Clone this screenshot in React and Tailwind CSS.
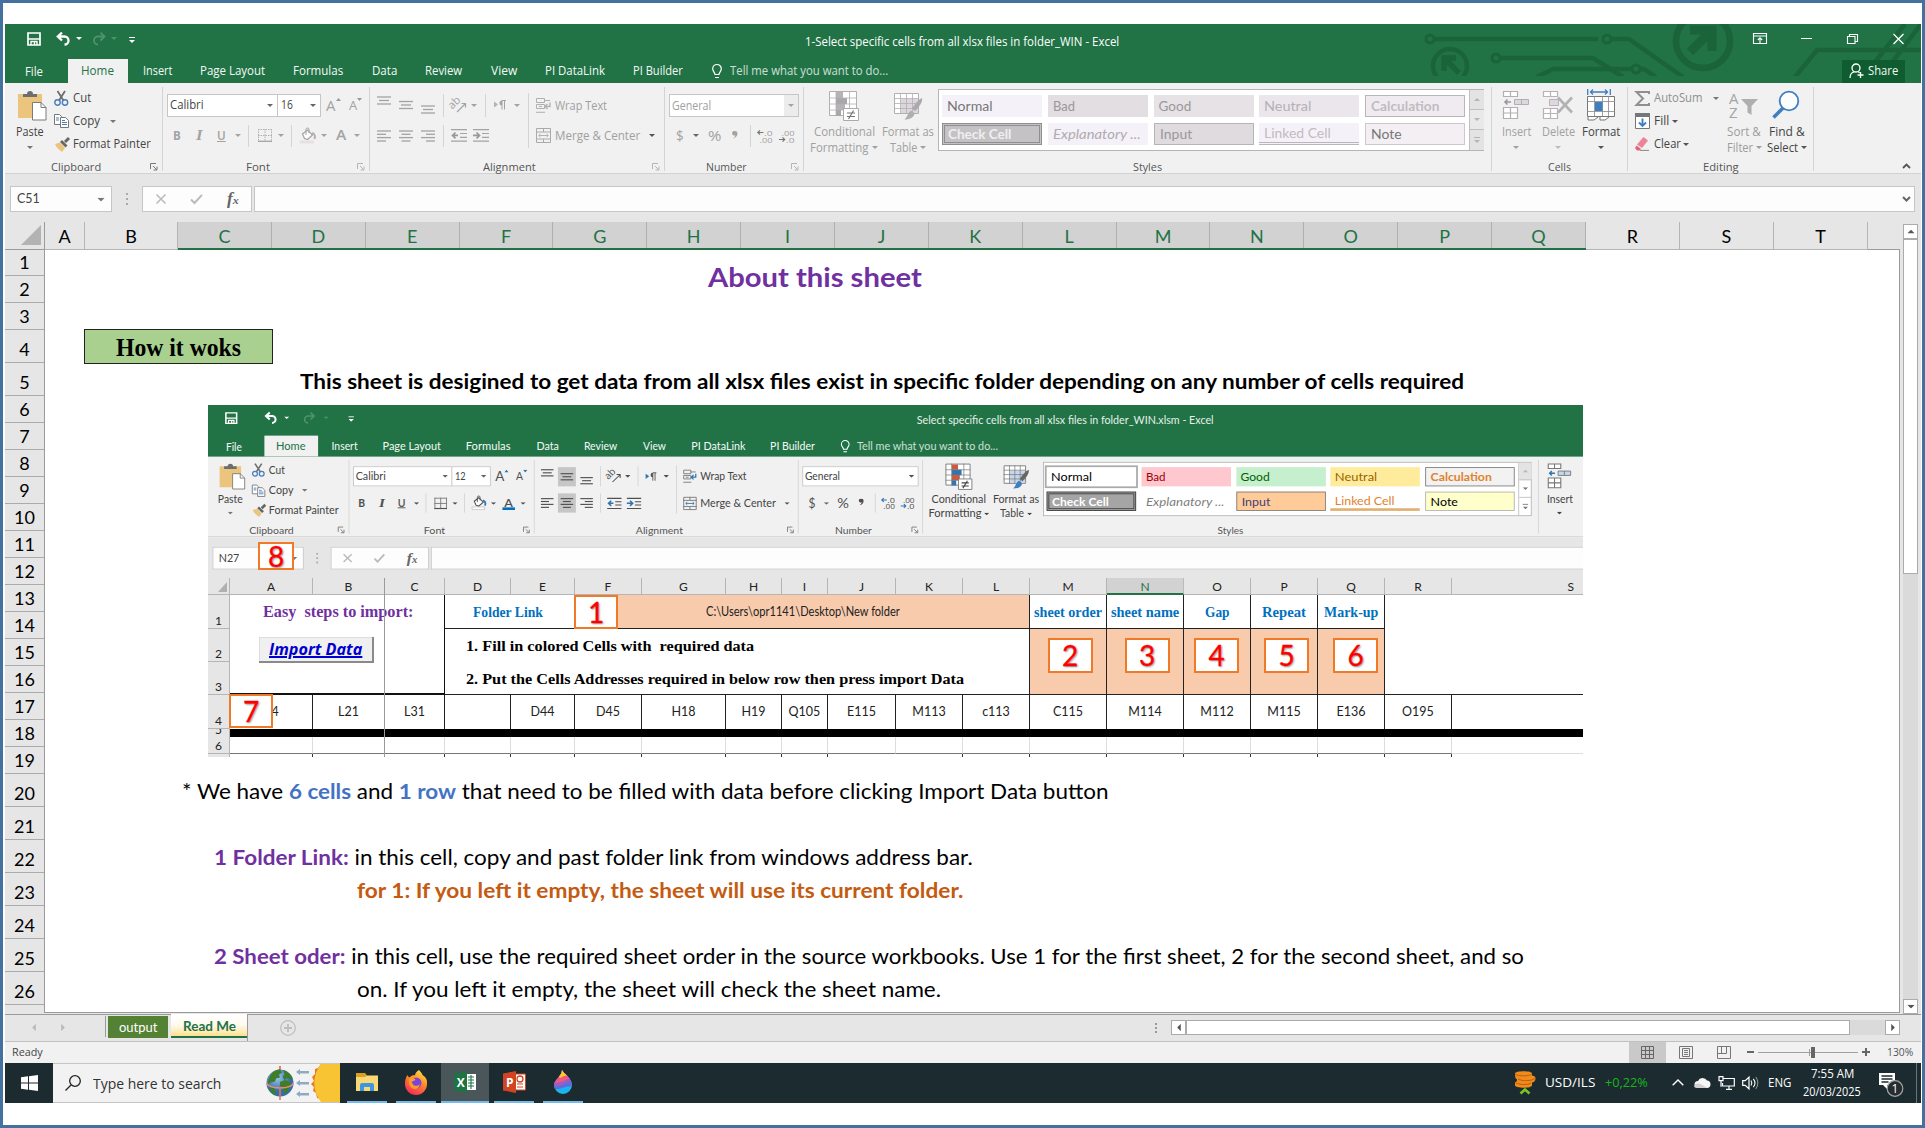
import { useLayoutEffect, useRef } from "react";

const LATO = "font-['Lato',sans-serif]";
const SERIF = "font-['Liberation_Serif',serif]";

/* Single-line text squeezed or stretched to the width its class gives it. */
function Fit({ className = "", children }) {
  const outer = useRef(null);
  const inner = useRef(null);
  useLayoutEffect(() => {
    const o = outer.current;
    const i = inner.current;
    if (i.offsetWidth) i.style.transform = `scaleX(${o.offsetWidth / i.offsetWidth})`;
  });
  return (
    <span ref={outer} className={`inline-block flex-none whitespace-nowrap ${className}`}>
      <span ref={inner} className="inline-block origin-left whitespace-pre">
        {children}
      </span>
    </span>
  );
}

function Caret({ className = "" }) {
  return (
    <svg viewBox="0 0 6 3" className={`h-[3px] w-[6px] flex-none ${className}`}>
      <path d="M0 0h6L3 3z" fill="currentColor" />
    </svg>
  );
}

const Sep = ({ className = "" }) => <span className={`w-px flex-none bg-[#d4d4d4] ${className}`} />;

function Svg({ w, h, className = "", children }) {
  return (
    <svg viewBox={`0 0 ${w} ${h}`} width={w} height={h} className={`flex-none overflow-visible ${className}`} fill="none">
      {children}
    </svg>
  );
}

function Lines({ rows, w = 14, h = 18 }) {
  return (
    <Svg w={w} h={h}>
      {rows.map(([x1, x2, y]) => (
        <path key={y} d={`M${x1} ${y}H${x2}`} stroke="currentColor" strokeWidth="1.3" />
      ))}
    </Svg>
  );
}

function Group({ className, label, labelClass, launcher = true, dimLauncher, children }) {
  return (
    <div className={`flex h-[84px] flex-none flex-col border-r border-[#d4d4d4] ${className}`}>
      <div className="flex h-[70px] flex-none items-start">{children}</div>
      <div className="flex h-[20px] flex-none items-center">
        <div className={`flex flex-1 justify-center ${launcher ? "pr-[4px]" : ""}`}>
          <Fit className={`text-[11.5px] leading-[18px] text-[#555] ${labelClass}`}>{label}</Fit>
        </div>
        {launcher && (
          <Svg w={8} h={8} className={`mr-[4px] ${dimLauncher ? "text-[#b5b5b5]" : "text-[#777]"}`}>
            <path d="M.5 6V.5H6M3 3l3.5 3.5M7 3.5V7H3.5" stroke="currentColor" />
          </Svg>
        )}
      </div>
    </div>
  );
}

function Ribbon({ live }) {
  const dim = live ? "text-[#505050]" : "text-[#a3a3a3]";
  const dimText = live ? "text-[#444]" : "text-[#a0a0a0]";
  const blue = live ? "#2e75b6" : "#b3b3b3";
  const grey = live ? "#777" : "#b3aeb3";
  return (
    <div className="flex h-[92px] border-b border-[#d2d2d2] bg-[#f1f1f1] pt-[4px] text-[#444]">
      <Group className="w-[158px]" label="Clipboard" labelClass="w-[50px]">
        <div className="ml-[7px] flex w-[36px] flex-none flex-col items-center">
          <Svg w={29} h={31} className="ml-[4px] mt-[3px]">
            <path d="M0 4h24v24H0z" fill="#ebc57d" />
            <path d="M5 7V4h4a3 3 0 0 1 6 0h4v3z" fill="#6e6e6e" />
            <path d="M14.5 12.5h8.5l5 5v12.5h-13.500z" fill="#fff" stroke="#7a7a7a" />
            <path d="M23 12.5v5h5" stroke="#7a7a7a" />
          </Svg>
          <Fit className="mt-[3px] w-[28px] text-[12px] leading-[16px]">Paste</Fit>
          <Caret className="mt-[6px] text-[#777]" />
        </div>
        <div className="ml-[6px] flex flex-none flex-col">
          <div className="flex h-[23px] items-center">
            <Svg w={15} h={15}>
              <path d="M3.5 0l6 9.5M11 0L5 9.500" stroke="#6e6e6e" strokeWidth="1.8" />
              <circle cx="3.5" cy="11.5" r="2.7" stroke="#4a7ebb" strokeWidth="1.4" />
              <circle cx="11" cy="11.5" r="2.7" stroke="#4a7ebb" strokeWidth="1.4" />
            </Svg>
            <Fit className="ml-[4px] w-[18px] text-[12px]">Cut</Fit>
          </div>
          <div className="flex h-[23px] items-center">
            <Svg w={15} h={14}>
              <path d="M.5.5h5l2 2v8h-7z" fill="#fff" stroke="#777" />
              <path d="M6.5 3.5h5l3 3v7h-8z" fill="#fff" stroke="#777" />
              <path d="M2 4h3M2 6h3M8 8.5h5M8 10.5h5M8 6.5h3" stroke="#4a7ebb" />
            </Svg>
            <Fit className="ml-[4px] w-[27px] text-[12px]">Copy</Fit>
            <Caret className="ml-[10px] text-[#777]" />
          </div>
          <div className="flex h-[23px] items-center">
            <Svg w={16} h={15}>
              <path d="M1 7l5-1.5L11 11l-3 4C5 13 2 10 1 7z" fill="#ebc57d" />
              <path d="M6 5l2-2 5.5 5.5-2 2z" fill="#666" />
              <path d="M11 5l4-4" stroke="#666" strokeWidth="3" />
            </Svg>
            <Fit className="ml-[3px] w-[78px] text-[12px]">Format Painter</Fit>
          </div>
        </div>
      </Group>

      <Group className="w-[207px]" label="Font" labelClass="w-[24px]" dimLauncher={!live}>
        <div className="flex flex-col pl-[4px]">
          <div className="mt-[7px] flex h-[23px] items-center">
            <div className="flex h-full w-[111px] flex-none items-center border border-[#c6c6c6] bg-white">
              <Fit className="ml-[2px] w-[34px] text-[12px]">Calibri</Fit>
              <Caret className="ml-[63px] text-[#666]" />
            </div>
            <div className="-ml-px flex h-full w-[44px] flex-none items-center border border-[#c6c6c6] bg-white">
              <Fit className="ml-[3px] w-[12px] text-[12px]">{live ? "12" : "16"}</Fit>
              <Caret className="ml-[17px] text-[#666]" />
            </div>
            <div className={`ml-[5px] flex ${dim}`}>
              <Fit className="w-[10px] text-[15px]">A</Fit>
              <svg viewBox="0 0 5 3" className="mt-[4px] h-[3px] w-[5px]"><path d="M0 3h5L2.5 0z" fill={live ? blue : "#999"} /></svg>
              <Fit className="ml-[8px] mt-[2px] w-[8px] text-[13px]">A</Fit>
              <svg viewBox="0 0 5 3" className="mt-[4px] h-[3px] w-[5px]"><path d="M0 0h5L2.5 3z" fill={live ? blue : "#999"} /></svg>
            </div>
          </div>
          <div className={`mt-[8px] flex h-[22px] items-center ${dim}`}>
            <Fit className="ml-[6px] w-[8px] text-[13px] font-bold">B</Fit>
            <Fit className={`ml-[15px] w-[6px] text-[14px] font-bold italic ${SERIF}`}>I</Fit>
            <Fit className="ml-[15px] w-[9px] text-[13px] font-semibold [&>span]:underline">U</Fit>
            <Caret className="ml-[9px]" />
            <Sep className="ml-[7px] h-[22px]" />
            <Svg w={14} h={13} className="ml-[9px]">
              <path d="M.5 0v13M13.5 0v13M7 0v13M0 .5h14M0 6.5h14" stroke={grey} strokeDasharray={live ? "" : "1.5 1"} />
              <path d="M0 12.3h14" stroke="currentColor" strokeWidth="1.3" />
            </Svg>
            <Caret className="ml-[6px]" />
            <Sep className="ml-[7px] h-[22px]" />
            <Svg w={16} h={16} className="ml-[8px]">
              <path d="M2.5 6l5-4 5 5-5 4.500-3-1z" fill="#fff" stroke="currentColor" strokeWidth="1.2" />
              <path d="M6 7V1.5a1.5 1.5 0 0 1 3 0V5" stroke="currentColor" />
              <path d="M12 5c3 1 3.5 3 2.5 6" stroke={blue} strokeWidth="2" />
              <path d="M0 12.5h14v3H0z" fill={live ? "#fff" : "#e6dfe6"} stroke={live ? "#aaa" : "none"} strokeWidth=".6" />
            </Svg>
            <Caret className="ml-[5px]" />
            <span className="ml-[7px] flex flex-col items-center">
              <Fit className="w-[10px] text-[14px] font-semibold leading-[13px]">A</Fit>
              <span className={`h-[3px] w-[14px] ${live ? "bg-[#0070c0]" : "bg-transparent"}`} />
            </span>
            <Caret className="ml-[6px]" />
          </div>
        </div>
      </Group>

      <Group className="w-[295px]" label="Alignment" labelClass="w-[53px]" dimLauncher={!live}>
        <div className={`flex w-[158px] flex-none flex-col ${dim}`}>
          <div className="mt-[7px] flex h-[23px] items-center">
            <span className="ml-[4px] flex w-[20px] justify-center"><Lines rows={[[0, 14, 1], [2, 12, 4.5], [0, 14, 8]]} /></span>
            <span className={`ml-[2px] flex w-[20px] justify-center py-[2px] ${live ? "bg-[#c6c6c6]" : ""}`}><Lines rows={[[0, 14, 5.5], [2, 12, 9], [0, 14, 12.5]]} /></span>
            <span className="ml-[2px] flex w-[20px] justify-center"><Lines rows={[[0, 14, 10], [2, 12, 13.5], [0, 14, 17]]} /></span>
            <Sep className="ml-[5px] h-[23px]" />
            <Svg w={16} h={15} className="ml-[7px]">
              <text x="0" y="9" transform="rotate(-45 4 9)" fontSize="11" fill="currentColor" fontFamily="Open Sans">ab</text>
              <path d="M6 14l8-8M14.5 9.5V5.5h-4" stroke="currentColor" strokeWidth="1.2" />
            </Svg>
            <Caret className="ml-[4px]" />
            <Sep className="ml-[8px] h-[23px]" />
            <Svg w={12} h={10} className="ml-[8px]">
              <path d="M0 1.5v6l4-3z" fill={blue} />
              <path d="M8 .5h4M8 .5v9M10.5.5v9" stroke="currentColor" />
              <path d="M8 .5a2.5 2.5 0 0 0 0 5z" fill="currentColor" />
            </Svg>
            <Caret className="ml-[8px]" />
          </div>
          <div className="mt-[8px] flex h-[22px] items-center">
            <span className="ml-[4px] flex w-[20px] justify-center"><Lines h={12} rows={[[0, 14, 1], [0, 9, 4.3], [0, 14, 7.6], [0, 9, 11]]} /></span>
            <span className={`ml-[2px] flex w-[20px] justify-center py-[5px] ${live ? "bg-[#c6c6c6]" : ""}`}><Lines h={12} rows={[[0, 14, 1], [2.5, 11.5, 4.3], [0, 14, 7.6], [2.5, 11.5, 11]]} /></span>
            <span className="ml-[2px] flex w-[20px] justify-center"><Lines h={12} rows={[[0, 14, 1], [5, 14, 4.3], [0, 14, 7.6], [5, 14, 11]]} /></span>
            <Sep className="ml-[5px] h-[22px]" />
            <Svg w={16} h={13} className="ml-[7px]">
              <path d="M0 .7h16M9 4.5h7M9 8.3h7M0 12.2h16" stroke="currentColor" strokeWidth="1.2" />
              <path d="M7 6.4H2M4.5 3.5L1.5 6.4l3 2.9" stroke={live ? blue : "#999"} strokeWidth="1.7" />
            </Svg>
            <Svg w={16} h={13} className="ml-[6px]">
              <path d="M0 .7h16M9 4.5h7M9 8.3h7M0 12.2h16" stroke="currentColor" strokeWidth="1.2" />
              <path d="M0 6.4h6M3.5 3.5l3 2.9-3 2.9" stroke={live ? blue : "#999"} strokeWidth="1.7" />
            </Svg>
          </div>
        </div>
        <Sep className="mt-[6px] h-[55px]" />
        <div className={`flex flex-col ${dimText}`}>
          <div className="mt-[7px] flex h-[23px] items-center">
            <Svg w={15} h={15} className="ml-[7px]">
              <path d="M.5.5h8v4h-8zM.5 6.5h8v4h-8zM0 14.3h9" stroke={grey} />
              <path d="M8 2.5h6M3 8.5h3" stroke={grey} />
              <path d="M14 4.5v4H9M11.5 6L9 8.5l2.5 2.5" stroke={blue} strokeWidth="1.4" />
            </Svg>
            <Fit className="ml-[4px] mt-[1px] w-[52px] text-[12px]">Wrap Text</Fit>
          </div>
          <div className="mt-[8px] flex h-[22px] items-center">
            <Svg w={15} h={15} className="ml-[7px]">
              <path d="M.5.5h14v14H.5zM0 4h15M0 11h15M7.5 0v4M7.5 11v4" stroke={live ? "#777" : "#aaa"} />
              <path d="M3 7.5h9M4.5 5.8L2.8 7.5l1.7 1.7M10.5 5.8l1.7 1.7-1.7 1.7" stroke={blue} />
            </Svg>
            <Fit className="ml-[4px] mt-[1px] w-[85px] text-[12px]">Merge &amp; Center</Fit>
            <Caret className="ml-[9px] text-[#555]" />
          </div>
        </div>
      </Group>

      <Group className="w-[139px]" label="Number" labelClass="w-[41px]" dimLauncher={!live}>
        <div className={`flex flex-col pl-[4px] ${dim}`}>
          <div className="mt-[7px] flex h-[23px] w-[130px] items-center border border-[#c6c6c6] bg-white">
            <Fit className={`ml-[2px] mt-[1px] w-[39px] text-[12px] ${dimText}`}>General</Fit>
            <span className={`ml-auto flex h-full w-[14px] items-center justify-center ${live ? "" : "bg-[#ececec]"}`}><Caret /></span>
          </div>
          <div className="mt-[8px] flex h-[22px] items-center">
            <Fit className="ml-[7px] w-[8px] text-[15px]">$</Fit>
            <Caret className="ml-[9px] text-[#666]" />
            <Fit className="ml-[9px] w-[13px] text-[15px]">%</Fit>
            <svg viewBox="0 0 6 9" className="mb-[2px] ml-[11px] h-[8px] w-[6px]"><path d="M3 0a2.6 2.6 0 1 0 .5 4.8C3 6.5 2 7.5 1 8.5 4 7.5 6 5.5 5.8 2.5A2.8 2.8 0 0 0 3 0z" fill="currentColor" /></svg>
            <Sep className="ml-[12px] h-[22px]" />
            <Svg w={16} h={14} className="ml-[6px]">
              <text x="7" y="6.5" fontSize="8" textLength="8.5" lengthAdjust="spacingAndGlyphs" fill="currentColor" fontFamily="Open Sans">.0</text>
              <text x="2.5" y="13.5" fontSize="8" textLength="13" lengthAdjust="spacingAndGlyphs" fill="currentColor" fontFamily="Open Sans">.00</text>
              <path d="M6.5 3.5H.8M3 1.3L.8 3.5l2.2 2.2" stroke={live ? blue : "#777"} strokeWidth="1.2" />
            </Svg>
            <Svg w={16} h={14} className="ml-[6px]">
              <text x="2.5" y="6.5" fontSize="8" textLength="13" lengthAdjust="spacingAndGlyphs" fill="currentColor" fontFamily="Open Sans">.00</text>
              <text x="7" y="13.5" fontSize="8" textLength="8.5" lengthAdjust="spacingAndGlyphs" fill="currentColor" fontFamily="Open Sans">.0</text>
              <path d="M0 10.5h5.700M3.500 8.300l2.200 2.200-2.200 2.200" stroke={live ? blue : "#777"} strokeWidth="1.2" />
            </Svg>
          </div>
        </div>
      </Group>

      <Group className="w-[688px]" label="Styles" labelClass="w-[29px]" launcher={false}>
        <div className={`ml-[5px] flex w-[70px] flex-none flex-col items-center ${dimText}`}>
          <Svg w={30} h={30} className="mt-[4px]">
            <path d="M.5.5h27v24H.5z" fill="#fff" stroke={grey} />
            <path d="M7 1h7v6H7zM7 13h9v6H7z" fill={live ? "#d0583a" : "#b5b3b5"} />
            <path d="M7 7h11v6H7zM7 19h5v6H7z" fill={live ? "#2e75b6" : "#a9a7a9"} />
            <path d="M0 7h28M0 13h28M0 19h28M7 0v25M20.5 0v25" stroke={grey} strokeWidth=".8" />
            <path d="M14.5 17.5h15v12h-15z" fill="#fff" stroke={live ? "#777" : "#aaa"} />
            <path d="M18 22h8M18 25.5h8M24.5 19.5l-5 8.5" stroke={live ? "#444" : "#777"} strokeWidth="1.2" />
          </Svg>
          <Fit className="mt-[3px] w-[61px] text-[12px] leading-[16px]">Conditional</Fit>
          <span className="flex h-[16px] items-center">
            <Fit className="w-[59px] text-[12px] leading-[16px]">Formatting</Fit>
            <Caret className="ml-[3px]" />
          </span>
        </div>
        <div className={`ml-[3px] flex w-[52px] flex-none flex-col items-center ${dimText}`}>
          <Svg w={29} h={30} className="mt-[4px]">
            <path d="M.5 2.5h24v20H.5z" fill="#fff" stroke={grey} />
            <path d="M7 8h17v14H7z" fill={live ? "#c5d7ec" : "#dcd7dc"} />
            <path d="M0 7.5h25M0 12.5h25M0 17.5h25M6.5 2v21M12.5 2v21M18.5 2v21" stroke={grey} strokeWidth=".8" />
            <path d="M28 7c1 4-3 9-7 13l-3-2.5C21 13 24 9 28 7z" fill={live ? "#666" : "#aaa"} />
            <path d="M17 19.5l3.5 2.5c0 4-4 6.5-10 6.5 3-2 3-7 6.5-9z" fill={live ? "#3f7fbf" : "#b0aeb0"} />
          </Svg>
          <Fit className="mt-[3px] w-[52px] text-[12px] leading-[16px]">Format as</Fit>
          <span className="flex h-[16px] items-center">
            <Fit className="w-[27px] text-[12px] leading-[16px]">Table</Fit>
            <Caret className="ml-[3px]" />
          </span>
        </div>
        <Gallery live={live} />
      </Group>

      {live ? (
        <div className="flex w-[44px] flex-none justify-end"><InsertCells live dimText={dimText} blue={blue} grey={grey} /></div>
      ) : (
        <CellsAndEditing dimText={dimText} blue={blue} grey={grey} />
      )}
    </div>
  );
}

function InsertCells({ live, dimText, blue, grey }) {
  return (
    <div className={`flex w-[42px] flex-none flex-col items-center ${dimText}`}>
      <Svg w={26} h={28} className="mt-[4px]">
        <path d="M.5.5h14v5H.5zM7.5.5v5M.5 16.5h14v11H.5zM7.5 16.5v11M.5 22h14" fill="#fff" stroke={grey} strokeWidth="1.2" />
        <path d="M11.5 8.5h14v5h-14zM18.5 8.5v5" fill={live ? "#c5d7ec" : "#ddd8dd"} stroke={grey} />
        <path d="M8 11H1.5M4.5 8.5L2 11l2.5 2.5" stroke={live ? blue : "#999"} strokeWidth="1.6" />
      </Svg>
      <Fit className="mt-[5px] w-[29px] text-[12px] leading-[16px]">Insert</Fit>
      <Caret className="mt-[6px]" />
    </div>
  );
}

function CellsAndEditing({ dimText, blue, grey }) {
  return (
    <>
      <Group className="w-[136px]" label="Cells" labelClass="w-[23px]" launcher={false}>
        <div className="ml-[3px] flex-none"><InsertCells dimText={dimText} blue={blue} grey={grey} /></div>
        <div className="flex w-[42px] flex-none flex-col items-center text-[#a0a0a0]">
          <Svg w={30} h={28} className="mt-[4px]">
            <path d="M.5.5h14v5H.5zM7.5.5v5M.5 17.5h14v10H.5zM7.5 17.5v10M.5 22.5h14" fill="#fff" stroke="#b9b3b9" strokeWidth="1.2" />
            <path d="M6.5 8.5h9v6h-9z" fill="#ddd8dd" stroke="#b9b3b9" />
            <path d="M15 6.5l14 15M29 6.5l-14 15" stroke="#b3b1b3" strokeWidth="2.6" />
          </Svg>
          <Fit className="mt-[5px] w-[33px] text-[12px] leading-[16px]">Delete</Fit>
          <Caret className="mt-[6px] text-[#bbb]" />
        </div>
        <div className="ml-[1px] flex w-[42px] flex-none flex-col items-center">
          <Svg w={28} h={32} className="mt-[2px]">
            <path d="M.7 0v6M23.3 0v6M3 3h18M6 .5L3.5 3 6 5.5M18 .5L20.5 3 18 5.5" stroke="#3f7fbf" strokeWidth="1.3" />
            <path d="M.5 7.5h27v20H.5z" fill="#fff" stroke="#777" />
            <path d="M0 12.5h28M0 22.5h28M7.5 7v20M15.5 7v20M21.5 7v20" stroke="#888" strokeWidth=".8" />
            <path d="M8 13h7.5v9H8z" fill="#3f7fbf" />
            <path d="M1 28v3h6l4-3M13 28v3h5l4-3" stroke="#777" fill="#fff" />
          </Svg>
          <Fit className="mt-[3px] w-[38px] text-[12px] leading-[16px]">Format</Fit>
          <Caret className="mt-[6px] text-[#555]" />
        </div>
      </Group>

      <Group className="w-[186px]" label="Editing" labelClass="w-[36px]" launcher={false}>
        <div className="ml-[7px] flex w-[90px] flex-none flex-col">
          <div className="flex h-[23px] items-center text-[#8f8f8f]">
            <Svg w={15} h={15}><path d="M14 3V1H1.5l6.5 6.5L1.5 14H14v-2" stroke="currentColor" strokeWidth="2" /></Svg>
            <Fit className="ml-[4px] w-[49px] text-[12px]">AutoSum</Fit>
            <Caret className="ml-[10px] text-[#777]" />
          </div>
          <div className="flex h-[23px] items-center">
            <Svg w={15} h={16}>
              <path d="M.5.5h14v15H.5z" fill="#fff" stroke="#777" />
              <path d="M0 0h15v4H0z" fill="#777" />
              <path d="M7.5 5.5v7.5M4 9.5L7.5 13 11 9.5" stroke="#3f7fbf" strokeWidth="1.9" />
            </Svg>
            <Fit className="ml-[4px] w-[15px] text-[12px]">Fill</Fit>
            <Caret className="ml-[3px] text-[#555]" />
          </div>
          <div className="flex h-[23px] items-center">
            <Svg w={15} h={14}>
              <path d="M8.5 0L13 3.5 7 11 2 7.5z" fill="#ee8296" />
              <path d="M1.5 8.5L6 12l-1.5 1.5H2L0 11z" fill="#e8607a" />
              <path d="M5 13.4h9" stroke="#888" />
            </Svg>
            <Fit className="ml-[4px] w-[27px] text-[12px]">Clear</Fit>
            <Caret className="ml-[2px] text-[#555]" />
          </div>
        </div>
        <div className="flex w-[40px] flex-none flex-col pl-[2px] text-[#9c9c9c]">
          <Svg w={29} h={28} className="ml-[2px] mt-[5px]">
            <text x="0" y="12" fontSize="15" fill="#a5a5a5" fontFamily="Open Sans">A</text>
            <text x="0" y="26" fontSize="15" fill="#a5a5a5" fontFamily="Open Sans">Z</text>
            <path d="M12 7h17l-6.500 7v9l-4-2.500V14z" fill="#b0aeb0" />
          </Svg>
          <Fit className="mt-[4px] w-[34px] text-[12px] leading-[16px]">Sort &amp;</Fit>
          <span className="flex h-[16px] items-center">
            <Fit className="w-[26px] text-[12px] leading-[16px]">Filter</Fit>
            <Caret className="ml-[3px]" />
          </span>
        </div>
        <div className="flex w-[42px] flex-none flex-col pl-[2px]">
          <Svg w={28} h={28} className="ml-[5px] mt-[4px]">
            <path d="M11 17l-9.5 9.5" stroke="#3f7fbf" strokeWidth="3.6" />
            <circle cx="17" cy="10" r="9.3" fill="#fdfdfd" stroke="#3f7fbf" strokeWidth="1.8" />
          </Svg>
          <Fit className="ml-[2px] mt-[5px] w-[36px] text-[12px] leading-[16px]">Find &amp;</Fit>
          <span className="flex h-[16px] items-center">
            <Fit className="w-[31px] text-[12px] leading-[16px]">Select</Fit>
            <Caret className="ml-[3px] text-[#555]" />
          </span>
        </div>
      </Group>
      <div className="flex flex-1 items-end justify-end pb-[4px] pr-[10px]">
        <Svg w={9} h={6}><path d="M1 5l3.5-3.5L8 5" stroke="#555" strokeWidth="1.8" /></Svg>
      </div>
    </>
  );
}

function Gallery({ live }) {
  const cell = "flex h-[22px] w-[100px] flex-none items-center pl-[5px] text-[13.5px]";
  const c = (on, off) => `${cell} ${live ? on : off}`;
  return (
    <div className={`ml-[4px] mt-[2px] flex h-[62px] w-[546px] flex-none border border-[#b5b5b5] bg-white ${LATO}`}>
      <div className="ml-[3px] mt-[5px] grid w-[527px] flex-none grid-cols-[repeat(5,105.8px)] grid-rows-[28px_22px]">
        <div className={c("bg-white text-black outline outline-2 outline-[#ababab]", "bg-[#f5f1f8] text-[#777]")}><Fit className="w-[46px]">Normal</Fit></div>
        <div className={c("bg-[#ffc7ce] text-[#9c0006]", "bg-[#e2dee2] text-[#999]")}><Fit className="w-[22px]">Bad</Fit></div>
        <div className={c("bg-[#c6efce] text-[#006100]", "bg-[#e6e2e6] text-[#999]")}><Fit className="w-[33px]">Good</Fit></div>
        <div className={c("bg-[#ffeb9c] text-[#9c6500]", "bg-[#ebe6ec] text-[#b5b0b5]")}><Fit className="w-[47px]">Neutral</Fit></div>
        <div className={c("border border-[#7f7f7f] bg-[#f2f2f2] font-bold text-[#e0822e]", "border border-[#b9b5b9] bg-[#f0ebf1] font-bold text-[#c0bcc0]")}><Fit className="w-[68px]">Calculation</Fit></div>
        <div className={c("border-[3px] border-double border-[#3f3f3f] bg-[#a5a5a5] font-bold text-white", "border-[3px] border-double border-[#8f8f8f] bg-[#c5c2c5] font-bold text-[#f0eef0]")}><Fit className="-ml-[2px] w-[63px]">Check Cell</Fit></div>
        <div className={c("bg-white italic text-[#7f7f7f]", "bg-[#f5f1f8] italic text-[#b0abb0]")}><Fit className="w-[88px]">Explanatory ...</Fit></div>
        <div className={c("border border-[#7f7f7f] bg-[#ffcc99] text-[#3f3f76]", "border border-[#b5b5b5] bg-[#dfdbdf] text-[#999]")}><Fit className="w-[32px]">Input</Fit></div>
        <div className={c("border-b-[3px] border-[#e0b070] bg-white pt-[2px] text-[#e0822e]", "border-b-[3px] border-double border-[#b9b5b9] bg-[#f5f1f8] pt-[2px] text-[#c0bcc0]")}><Fit className="w-[67px]">Linked Cell</Fit></div>
        <div className={c("border border-[#b2b2b2] bg-[#ffffcc] text-black", "border border-[#ccc8cc] bg-[#f3eff3] text-[#777]")}><Fit className="w-[31px]">Note</Fit></div>
      </div>
      <div className="ml-auto flex w-[15px] flex-none flex-col border-l border-[#c0c0c0] text-[#777]">
        <span className="flex h-[20px] items-center justify-center border-b border-[#c0c0c0] bg-[#e3e3e3] text-[#b5b5b5]"><Caret className="rotate-180" /></span>
        <span className={`flex h-[20px] items-center justify-center border-b border-[#c0c0c0] ${live ? "" : "bg-[#e9e9e9] text-[#b5b5b5]"}`}><Caret /></span>
        <span className={`flex flex-1 flex-col items-center justify-center gap-[2px] ${live ? "" : "bg-[#e3e3e3] text-[#b5b5b5]"}`}><span className="h-px w-[6px] bg-current" /><Caret /></span>
      </div>
    </div>
  );
}

function Circuits() {
  return (
    <svg viewBox="0 0 501 52" className="absolute right-0 top-0 h-[52px] w-[501px]" fill="none" stroke="#1b6339" strokeWidth="4.5">
      <path d="M13 15h165M187 15h22l54 38" />
      <circle cx="10" cy="15" r="4" strokeWidth="3" />
      <circle cx="187" cy="15" r="4" strokeWidth="3" fill="#217346" />
      <path d="M80 34h93l30 19" />
      <circle cx="76" cy="34" r="4" strokeWidth="3" />
      <path d="M117 53l16-8h78M219 45h5l12 8" />
      <circle cx="216" cy="45" r="4" strokeWidth="3" />
      <circle cx="30" cy="42" r="17" />
      <path d="M24 47V34h12M24 34l15 15" strokeWidth="5.5" />
      <circle cx="283" cy="17" r="27" strokeWidth="6.5" />
      <path d="M270 6h22v21M292 6l-22 22" strokeWidth="9" />
      <path d="M375 53l22-27h106M443 53l42-53M461 53l40-53" />
    </svg>
  );
}

function TitleAndTabs({ live, title, titleClass }) {
  const tab = "flex-none text-[12px] leading-[24px]";
  const gap = (on, off) => (live ? on : off);
  return (
    <div className="relative h-[59px] overflow-hidden bg-[#217346] text-white">
      {!live && <Circuits />}
      <div className="relative flex h-[35px] items-center">
        <div className="flex w-[600px] flex-none items-center pb-[6px]">
          <Svg w={14} h={14} className={gap("ml-[19px]", "ml-[22px]")}>
            <path d="M1 1h12v12H1zM1 7h12" stroke="#fff" strokeWidth="1.7" />
            <path d="M4 13V9.5h6V13M7.5 10v3" stroke="#fff" strokeWidth="1.4" />
          </Svg>
          <Svg w={15} h={13} className={gap("ml-[30px]", "ml-[15px]")}>
            <path d="M2 4.5h6.5a4 4 0 0 1 0 8M6 .7L1.8 4.5 6 8.5" stroke="#fff" strokeWidth="2.3" />
          </Svg>
          <Caret className={`text-white ${gap("ml-[7px]", "ml-[5px]")}`} />
          <Svg w={14} h={13} className={gap("ml-[15px]", "ml-[10px]")}>
            <path d="M12 4.5H6a4 4 0 0 0 0 8M8.5.7l4 3.8-4 4" stroke="#4f9270" strokeWidth="1.8" />
          </Svg>
          <Caret className={`text-[#4f9270] ${gap("ml-[9px]", "ml-[5px]")}`} />
          <span className={`flex flex-col items-center gap-[2px] pt-[3px] ${gap("ml-[22px]", "ml-[12px]")}`}><span className="h-[1.5px] w-[6px] bg-white" /><Caret className="text-white" /></span>
        </div>
        <div className={`flex justify-center pt-[1px] ${gap("w-[716px] flex-none", "flex-1 pr-[2px]")}`}><Fit className={`text-[12px] ${titleClass}`}>{title}</Fit></div>
        {!live && (
          <div className="flex w-[600px] flex-none items-center pb-[6px]">
            <Svg w={14} h={11} className="ml-[432px]">
              <path d="M.5.5h13v10H.5zM0 3h14M7 10V5M4.8 7L7 4.8 9.2 7" stroke="#fff" strokeWidth="1.1" />
            </Svg>
            <span className="ml-[34px] h-[1.5px] w-[11px] bg-white" />
            <Svg w={11} h={10} className="ml-[35px]">
              <path d="M.5 2.5h7.5v7H.5zM2.5 2.5v-2h8v7h-2.500" stroke="#fff" strokeWidth="1.1" />
            </Svg>
            <Svg w={11} h={10} className="ml-[35px]"><path d="M.5 0l10 10M10.5 0l-10 10" stroke="#fff" strokeWidth="1.2" /></Svg>
          </div>
        )}
      </div>
      <div className="relative flex h-[24px] items-center text-[#f4faf6]">
        <Fit className={`ml-[20px] mt-[1px] w-[18px] ${tab}`}>File</Fit>
        <span className="ml-[25px] flex w-[60px] flex-none justify-center bg-[#f1f1f1] pr-[2px] text-[#217346]"><Fit className={`w-[33px] ${tab}`}>Home</Fit></span>
        <Fit className={`ml-[15px] w-[29px] ${tab}`}>Insert</Fit>
        <Fit className={`ml-[28px] w-[65px] ${tab}`}>Page Layout</Fit>
        <Fit className={`ml-[28px] w-[50px] ${tab}`}>Formulas</Fit>
        <Fit className={`ml-[29px] w-[25px] ${tab}`}>Data</Fit>
        <Fit className={`ml-[28px] w-[37px] ${tab}`}>Review</Fit>
        <Fit className={`ml-[29px] w-[26px] ${tab}`}>View</Fit>
        <Fit className={`ml-[28px] w-[60px] ${tab}`}>PI DataLink</Fit>
        <Fit className={`ml-[28px] w-[50px] ${tab}`}>PI Builder</Fit>
        <Svg w={10} h={15} className="ml-[29px]">
          <path d="M3 10.5C3 8.5.7 7.5.7 4.8a4.3 4.3 0 0 1 8.600 0C9.3 7.5 7 8.5 7 10.5zM3 13.5h4" stroke="#fff" strokeWidth="1.2" />
        </Svg>
        <Fit className={`ml-[8px] w-[158px] opacity-80 ${tab}`}>Tell me what you want to do...</Fit>
        {!live && (
          <div className="ml-auto mr-[16px] flex h-[23px] w-[63px] flex-none items-center bg-[#0e5c2f]">
            <Svg w={15} h={16} className="ml-[7px]">
              <circle cx="7" cy="5" r="4" stroke="#fff" strokeWidth="1.3" />
              <path d="M1 15c0-3.5 2-6 4.5-6.2M9 8.5l1.5 1.2M11.5 9v6M8.5 12h6" stroke="#fff" strokeWidth="1.3" />
            </Svg>
            <Fit className="ml-[4px] w-[30px] text-[12px]">Share</Fit>
          </div>
        )}
      </div>
    </div>
  );
}

function FormulaBar({ name, live }) {
  return (
    <div className={`flex bg-[#e6e6e6] ${live ? "h-[47px] pt-[11px]" : "h-[48px] pr-[6px] pt-[12px]"}`}>
      <div className="ml-[5px] flex h-[26px] w-[102px] flex-none items-center border border-[#c6c6c6] bg-[#fdfdfd]">
        <Fit className={`ml-[6px] w-[23px] text-[13px] text-[#444] ${LATO}`}>{name}</Fit>
        <Caret className="ml-[58px] scale-125 text-[#777]" />
      </div>
      <div className="flex w-[30px] flex-none flex-col items-center justify-center gap-[3px] pb-[10px]">
        <span className="size-[2px] bg-[#aaa]" /><span className="size-[2px] bg-[#aaa]" /><span className="size-[2px] bg-[#aaa]" />
      </div>
      <div className="flex h-[26px] w-[110px] flex-none items-center border border-[#c6c6c6] bg-[#fdfdfd]">
        <Svg w={10} h={10} className="ml-[13px]"><path d="M.5.5l9 9M9.5.5l-9 9" stroke="#bbb" strokeWidth="1.6" /></Svg>
        <Svg w={13} h={10} className="ml-[24px]"><path d="M1 5.5L4.5 9 12 .8" stroke="#bbb" strokeWidth="2" /></Svg>
        <Fit className={`ml-[24px] w-[12px] text-[16px] font-bold italic leading-[20px] text-[#666] ${SERIF}`}>f<span className="text-[11px]">x</span></Fit>
      </div>
      <div className={`ml-[2px] flex h-[26px] flex-1 items-center justify-end border border-[#c6c6c6] bg-[#fdfdfd] pr-[3px] ${live ? "border-r-0" : ""}`}>
        {!live && <Svg w={9} h={6}><path d="M1 1l3.5 3.5L8 1" stroke="#666" strokeWidth="2" /></Svg>}
      </div>
    </div>
  );
}

/* ---- the picture placed on the sheet ---- */

function Badge({ className = "", children }) {
  return (
    <span className={`flex items-center justify-center border-2 border-[#f07a28] bg-white text-[28px] leading-none text-[#f00] [-webkit-text-stroke:0.3px_#f00] [text-shadow:1px_1px_2px_#888] ${LATO} ${className}`}>
      {children}
    </span>
  );
}

const picCols = "grid grid-cols-[22px_83px_72px_60px_66px_64px_67px_84px_56px_46px_68px_67px_67px_77px_77px_67px_67px_67px_67px_131px]";
const picRow4 = ["4", "L21", "L31", "", "D44", "D45", "H18", "H19", "Q105", "E115", "M113", "c113", "C115", "M114", "M112", "M115", "E136", "O195", ""];
const rowNo = "flex items-end justify-center border-b border-r border-[#b5b5b5] bg-[#e6e6e6] text-[12px] leading-[14px] text-[#222]";

function Picture() {
  const head = "flex items-center justify-center border-b border-r border-[#222] pt-[1px] text-[15px] font-bold text-[#0070c0]";
  const peach = "flex justify-center border-b border-r border-[#222] bg-[#f8cbad] pt-[9px]";
  return (
    <div className="relative h-[352px] w-[1375px] overflow-hidden bg-white">
      <div className="h-[173px] w-[1375px] overflow-hidden">
        <div className="w-[1537px] origin-top-left scale-x-[0.895] scale-y-[0.875]">
          <TitleAndTabs live title="Select specific cells from all xlsx files in folder_WIN.xlsm - Excel" titleClass="w-[332px] text-[#e6f0ea]" />
          <Ribbon live />
          <FormulaBar live name="N27" />
        </div>
      </div>
      <div className={`${picCols} h-[17px] bg-[#e6e6e6] text-[12px] leading-[17px] text-[#222] ${LATO}`}>
        <div className="flex items-end justify-end border-b border-r border-[#b5b5b5] pb-[2px] pr-[2px]">
          <svg viewBox="0 0 9 10" className="h-[10px] w-[9px]"><path d="M9 0v10H0z" fill="#b0b0b0" /></svg>
        </div>
        {"ABCDEFGHIJKLMNOPQR".split("").map((l) => (
          <div key={l} className={`h-[17px] border-r text-center ${l === "N" ? "border-b-2 border-b-[#217346] border-r-[#bbb] bg-[#d2d2d2] text-[#217346]" : "border-b border-[#b5b5b5]"}`}>{l}</div>
        ))}
        <div className="h-[17px] border-b border-[#b5b5b5] pr-[9px] text-right">S</div>
      </div>
      <div className={`${picCols} grid-rows-[34px_33px_33px] ${SERIF}`}>
        <div className={`${rowNo} col-start-1 row-start-1 ${LATO}`}>1</div>
        <div className={`${rowNo} col-start-1 row-start-2 ${LATO}`}>2</div>
        <div className={`${rowNo} col-start-1 row-start-3 ${LATO}`}>3</div>
        <div className="col-span-3 col-start-2 row-span-3 row-start-1 flex flex-col items-start border-b-2 border-r border-[#111]">
          <Fit className="ml-[33px] mt-[6px] w-[150px] text-[16px] font-bold leading-[22px] text-[#7030a0]">Easy  steps to import:</Fit>
          <div className="ml-[29px] mt-[14px] flex h-[26px] w-[115px] items-center justify-center border-b-2 border-r-2 border-[#8a8a8a] bg-[#f0f0f0] shadow-[inset_1px_1px_0_#ddd]">
            <Fit className="w-[93px] font-['Open_Sans',sans-serif] text-[16px] font-bold italic text-[#0000d0] [&>span]:underline [&>span]:decoration-2">Import Data</Fit>
          </div>
        </div>
        <div className="col-span-2 col-start-5 row-start-1 flex items-center border-b border-[#222] pl-[28px] pt-[1px]">
          <Fit className="w-[70px] text-[15px] font-bold text-[#0070c0]">Folder Link</Fit>
        </div>
        <div className={`col-span-7 col-start-7 row-start-1 flex items-center border-b border-r border-[#222] bg-[#f8cbad] pl-[131px] pt-[1px] ${LATO}`}>
          <Fit className="w-[194px] text-[12.5px] text-[#222]">C:\Users\opr1141\Desktop\New folder</Fit>
        </div>
        <div className="col-span-9 col-start-5 row-span-2 row-start-2 flex flex-col items-start border-b border-r border-[#222] pl-[21px] pt-[7px] font-bold text-black">
          <Fit className="w-[288px] text-[15.5px] leading-[20px]">1. Fill in colored Cells with  required data</Fit>
          <Fit className="mt-[13px] w-[498px] text-[15.5px] leading-[20px]">2. Put the Cells Addresses required in below row then press import Data</Fit>
        </div>
        <div className={`${head} col-start-14 row-start-1`}><Fit className="w-[68px]">sheet order</Fit></div>
        <div className={`${head} col-start-15 row-start-1`}><Fit className="w-[68px]">sheet name</Fit></div>
        <div className={`${head} col-start-16 row-start-1`}><Fit className="w-[25px]">Gap</Fit></div>
        <div className={`${head} col-start-17 row-start-1`}><Fit className="w-[44px]">Repeat</Fit></div>
        <div className={`${head} col-start-18 row-start-1`}><Fit className="w-[54px]">Mark-up</Fit></div>
        <div className={`${peach} col-start-14 row-span-2 row-start-2`}><Badge className="ml-[4px] h-[35px] w-[45px]">2</Badge></div>
        <div className={`${peach} col-start-15 row-span-2 row-start-2`}><Badge className="ml-[4px] h-[35px] w-[45px]">3</Badge></div>
        <div className={`${peach} col-start-16 row-span-2 row-start-2`}><Badge className="-ml-[1px] h-[35px] w-[45px]">4</Badge></div>
        <div className={`${peach} col-start-17 row-span-2 row-start-2`}><Badge className="ml-[5px] h-[35px] w-[45px]">5</Badge></div>
        <div className={`${peach} col-start-18 row-span-2 row-start-2`}><Badge className="ml-[9px] h-[35px] w-[45px]">6</Badge></div>
        <div className="col-span-2 col-start-19 row-span-3 row-start-1 border-b border-[#222]" />
      </div>
      <div className={`${picCols} h-[34px] text-[12.5px] text-[#222] ${LATO}`}>
        <div className={rowNo}>4</div>
        {picRow4.map((t, i) => (
          <div key={i} className={`flex items-center justify-center pt-[1px] ${i < 18 ? "border-r border-[#222]" : ""} ${i === 0 ? "pl-[8px]" : ""}`}>{t}</div>
        ))}
      </div>
      <div className="flex h-[8px] bg-black">
        <div className={`h-full w-[22px] overflow-hidden border-r border-[#b5b5b5] bg-[#e6e6e6] text-center text-[12px] leading-[2px] text-[#222] ${LATO}`}>5</div>
      </div>
      <div className={`${picCols} h-[17px] ${LATO}`}>
        <div className={rowNo}>6</div>
        {picRow4.map((t, i) => (
          <div key={i} className={`border-b ${i < 18 ? "border-r border-b-[#777] border-r-[#ddd]" : "border-[#ddd]"}`} />
        ))}
      </div>
      <div className={`${picCols} h-[3px]`}>
        <div className="border-r border-[#b5b5b5] bg-[#e6e6e6]" />
        {picRow4.map((t, i) => (
          <div key={i} className={i < 18 && i !== 9 ? "border-r border-[#333]" : ""} />
        ))}
      </div>
      <span className="absolute left-[176px] top-[173px] h-[179px] w-px bg-[#9a9a9a]" />
      <Badge className="absolute left-[50px] top-[137px] h-[28px] w-[36px]">8</Badge>
      <Badge className="absolute left-[366px] top-[190px] h-[34px] w-[44px]">1</Badge>
      <Badge className="absolute left-[21px] top-[289px] h-[34px] w-[44px]">7</Badge>
    </div>
  );
}

/* ---- worksheet ---- */

const rowHeights = [
  ["1", "h-[26px]"], ["2", "h-[27px]"], ["3", "h-[27px]"], ["4", "h-[33px]"], ["5", "h-[33px]"],
  ...Array.from({ length: 14 }, (_, i) => [String(i + 6), "h-[27px]"]),
  ...Array.from({ length: 7 }, (_, i) => [String(i + 20), "h-[33px]"]),
];

function Sheet() {
  const line = "flex h-[33px] flex-none items-center text-[21px] text-black";
  return (
    <div className="flex flex-none bg-[#e6e6e6]">
      <div className="w-[1895px] flex-none">
        <div className={`flex h-[28px] text-center text-[18px] leading-[29px] text-black ${LATO}`}>
          <div className="flex w-[40px] flex-none items-center justify-end border-b border-r border-[#9b9b9b] pr-[3px]">
            <svg viewBox="0 0 20 20" className="size-[20px]"><path d="M20 0v20H0z" fill="#b3b3b3" /></svg>
          </div>
          <div className="w-[40px] flex-none border-b border-r border-[#b5b5b5]">A</div>
          <div className="w-[93px] flex-none border-b border-r border-[#b5b5b5]">B</div>
          <div className="flex w-[1408px] flex-none border-b-2 border-[#217346] bg-[#d2d2d2] text-[#217346]">
            {"CDEFGHIJKLMNOPQ".split("").map((l) => (
              <div key={l} className="h-[26px] flex-1 border-r border-[#b0b0b0]">{l}</div>
            ))}
          </div>
          {"RST".split("").map((l) => (
            <div key={l} className="w-[94px] flex-none border-b border-r border-[#b5b5b5]">{l}</div>
          ))}
          <div className="flex-1 border-b border-[#9b9b9b]" />
        </div>
        <div className="flex h-[763px] overflow-hidden">
          <div className={`flex w-[40px] flex-none flex-col border-r border-[#9b9b9b] text-[18px] leading-[25px] text-black ${LATO}`}>
            {rowHeights.map(([n, h]) => (
              <div key={n} className={`flex flex-none items-end justify-center border-b border-[#ababab] ${h}`}>{n}</div>
            ))}
          </div>
          <div className={`flex flex-1 flex-col border-b border-r border-[#9b9b9b] bg-white pl-[1px] ${LATO}`}>
            <div className="flex h-[53px] flex-none items-center pt-[2px]">
              <Fit className="ml-[662px] w-[214px] text-[27px] font-bold text-[#7030a0]">About this sheet</Fit>
            </div>
            <div className="h-[26px] flex-none" />
            <div className={`ml-[38px] flex h-[35px] w-[189px] flex-none items-center justify-center border border-[#222] bg-[#a9d08e] pt-[3px] ${SERIF}`}>
              <Fit className="w-[125px] text-[25px] font-bold text-black">How it woks</Fit>
            </div>
            <div className="flex h-[41px] flex-none items-center pb-[7px] text-[21px] text-black">
              <Fit className="ml-[254px] w-[1164px] font-bold">This sheet is desigined to get data from all xlsx files exist in specific folder depending on any number of cells required</Fit>
            </div>
            <div className="ml-[162px] flex-none"><Picture /></div>
            <div className="h-[17px] flex-none" />
            <div className={line}>
              <Fit className="ml-[136px] w-[927px]">* We have <b className="text-[#4472c4]">6 cells</b> and <b className="text-[#4472c4]">1 row</b> that need to be filled with data before clicking Import Data button</Fit>
            </div>
            <div className={line} />
            <div className={line}>
              <Fit className="ml-[168px] w-[759px]"><b className="text-[#7030a0]">1 Folder Link:</b> in this cell, copy and past folder link from windows address bar.</Fit>
            </div>
            <div className={line}>
              <Fit className="ml-[311px] w-[606px] font-bold text-[#c55a11]">for 1: If you left it empty, the sheet will use its current folder.</Fit>
            </div>
            <div className={line} />
            <div className={line}>
              <Fit className="ml-[168px] w-[1310px]"><b className="text-[#7030a0]">2 Sheet oder:</b> in this cell<b>,</b> use the required sheet order in the source workbooks. Use 1 for the first sheet, 2 for the second sheet, and so</Fit>
            </div>
            <div className={line}>
              <Fit className="ml-[311px] w-[584px]">on. If you left it empty, the sheet will check the sheet name.</Fit>
            </div>
          </div>
        </div>
      </div>
      <div className="ml-[3px] mt-[2px] flex h-[790px] w-[15px] flex-none flex-col bg-[#dadada]">
        <span className="flex h-[15px] flex-none items-center justify-center border border-[#ababab] bg-white text-[#555]"><Caret className="rotate-180 scale-125" /></span>
        <span className="h-[335px] flex-none border border-[#ababab] bg-white" />
        <span className="mt-auto flex h-[15px] flex-none items-center justify-center border border-[#ababab] bg-white text-[#555]"><Caret className="scale-125" /></span>
      </div>
    </div>
  );
}

function TabStrip() {
  return (
    <div className={`flex h-[28px] flex-none border-b border-[#c0c0c0] bg-[#e6e6e6] ${LATO}`}>
      <div className="flex w-[100px] flex-none items-center border-t border-[#9b9b9b] text-[#b8b8b8]">
        <Caret className="ml-[26px] rotate-90 scale-125" />
        <Caret className="ml-[23px] -rotate-90 scale-125" />
      </div>
      <div className="flex w-[66px] flex-none border-t border-[#9b9b9b] pt-[1px]">
        <span className="h-[21px] w-px bg-[#9b9b9b]" />
        <span className="ml-[2px] flex h-[22px] w-[60px] items-center justify-center bg-[#548235] pb-[1px] text-white"><Fit className="w-[38px] text-[14px]">output</Fit></span>
      </div>
      <div className="flex h-[24px] w-[76px] flex-none items-center justify-center border-b-2 border-[#217346] bg-gradient-to-b from-white via-[#fffaf0] to-[#ffe08a] pt-[2px] text-[#217346]">
        <Fit className="w-[53px] text-[14px] font-bold">Read Me</Fit>
      </div>
      <div className="flex flex-1 items-center border-l border-t border-[#9b9b9b]">
        <Svg w={16} h={16} className="ml-[32px]">
          <circle cx="8" cy="8" r="7.3" stroke="#bdbdbd" strokeWidth="1.2" />
          <path d="M8 4v8M4 8h8" stroke="#bdbdbd" strokeWidth="1.8" />
        </Svg>
        <div className="ml-auto flex flex-col gap-[2px]"><span className="size-[2px] bg-[#999]" /><span className="size-[2px] bg-[#999]" /><span className="size-[2px] bg-[#999]" /></div>
        <div className="ml-[14px] mr-[21px] flex h-[15px] w-[729px] bg-[#dadada] text-[#555]">
          <span className="flex w-[15px] flex-none items-center justify-center border border-[#ababab] bg-white"><Caret className="rotate-90 scale-125" /></span>
          <span className="w-[664px] flex-none border border-[#ababab] bg-white" />
          <span className="ml-auto flex w-[15px] flex-none items-center justify-center border border-[#ababab] bg-white"><Caret className="-rotate-90 scale-125" /></span>
        </div>
      </div>
    </div>
  );
}

function StatusBar() {
  return (
    <div className="flex h-[21px] flex-none items-center bg-[#f1f1f1] text-[#555]">
      <Fit className="mb-[2px] ml-[7px] w-[31px] text-[11.5px] text-[#444]">Ready</Fit>
      <div className="ml-auto flex h-full w-[37px] items-center justify-center bg-[#c9c9c9]">
        <Svg w={13} h={13}><path d="M.5.5h12v12H.5zM0 4.5h13M0 8.5h13M4.5 0v13M8.5 0v13" stroke="#666" /></Svg>
      </div>
      <Svg w={14} h={13} className="ml-[13px]"><path d="M.5.5h13v12H.5zM3.5 2.5h7v8h-7zM5 4.5h4M5 6.5h4M5 8.5h4" stroke="#777" /></Svg>
      <Svg w={14} h={13} className="ml-[24px]"><path d="M.5.5h13v12H.5zM4.5.5v7M9.5.5v7M.5 7.5h9" stroke="#777" /></Svg>
      <span className="ml-[16px] h-[2px] w-[7px] bg-[#666]" />
      <span className="ml-[4px] h-px w-[51px] bg-[#a0a0a0]" />
      <span className="h-[7px] w-px bg-[#a0a0a0]" />
      <span className="h-px w-px bg-[#a0a0a0]" />
      <span className="h-[11px] w-[4px] bg-[#666]" />
      <span className="h-px w-[43px] bg-[#a0a0a0]" />
      <Svg w={8} h={8} className="ml-[4px]"><path d="M4 0v8M0 4h8" stroke="#666" strokeWidth="2" /></Svg>
      <Fit className="mb-[2px] ml-[17px] mr-[8px] w-[26px] text-[11.5px]">130%</Fit>
    </div>
  );
}

function TaskButton({ className = "", children }) {
  return (
    <div className={`flex h-full flex-none flex-col items-center ${className}`}>
      <div className="flex flex-1 items-center">{children}</div>
      <span className="h-[2px] w-full bg-[#76b9ed]" />
    </div>
  );
}

function Taskbar() {
  return (
    <div className="flex h-[40px] flex-none items-center bg-[#1b2b30] text-white">
      <div className="flex w-[48px] flex-none justify-center">
        <Svg w={17} h={16}><path d="M0 2.3l7-1v6.2H0zM8 1.2L17 0v7.5H8zM0 8.5h7v6.2l-7-1zM8 8.5h9V16l-9-1.200z" fill="#fff" /></Svg>
      </div>
      <div className="flex h-full w-[287px] flex-none items-center border-y border-[#c5c5c5] bg-[#f2f2f2]">
        <Svg w={16} h={16} className="ml-[12px]">
          <circle cx="10" cy="6" r="5.3" stroke="#222" strokeWidth="1.3" />
          <path d="M6 10l-5.5 5.5" stroke="#222" strokeWidth="1.3" />
        </Svg>
        <Fit className="ml-[12px] mt-[2px] w-[128px] text-[14.5px] text-[#333]">Type here to search</Fit>
        <Svg w={28} h={36} className="ml-[45px]">
          <defs>
            <radialGradient id="sea" cx=".4" cy=".3"><stop offset="0" stopColor="#9cc8ee" /><stop offset="1" stopColor="#2f6fae" /></radialGradient>
          </defs>
          <path d="M14 1v8" stroke="#e8735a" strokeWidth="1.8" />
          <circle cx="14" cy="18" r="13.5" fill="url(#sea)" />
          <path d="M4 11c2-4 6-6.500 10-6.500l2 3-3 2 1 3-4 1-1 3-4 1-3 2c0-3 .5-6 2-8.500zM17 5c4 1 8 4 9.500 8l-2 2-3-2-3 2-2-3 2-3zM14 17l5-2 5 2 1 4-4 6-3 2-1-6-3-2zM3 22l5 1 2 4-1 3c-3-1-5-4-6-8z" fill="#3f7d28" />
          <path d="M.5 18c3 6.5 24 6.5 27 0" stroke="#ef8a72" strokeWidth="1.6" />
          <path d="M14 22v13" stroke="#e8735a" strokeWidth="1.6" />
        </Svg>
        <Svg w={13} h={28} className="ml-[2px]">
          <path d="M0 3l4-3v2h9v2.500H4V6zM0 14l4-3v2h9v2.500H4V17zM0 25l4-3v2h9v2.500H4V28z" fill="#8fa9c4" />
        </Svg>
        <Svg w={29} h={38} className="ml-auto">
          <path d="M29 0H10L7 4l-3 1v5l-3 3 2 4-3 3 3 3-1 4 3 2 1 5 4 1 1 3h18z" fill="#e8791c" />
          <path d="M29 0H10C1 11 1 27 10 38h19z" fill="#f8c433" />
        </Svg>
      </div>
      <TaskButton className="ml-[7px] w-[40px]">
        <Svg w={22} h={19} className="mt-[1px]">
          <path d="M0 2.5h22V18H0z" fill="#fbd876" />
          <path d="M0 0h9l2 2.500L9 4H0z" fill="#dba125" />
          <path d="M4 18v-6a2 2 0 0 1 2-2h10a2 2 0 0 1 2 2v6h-4v-4H8v4z" fill="#3c96e0" />
        </Svg>
      </TaskButton>
      <TaskButton className="ml-[9px] w-[40px]">
        <Svg w={24} h={24}>
          <defs>
            <linearGradient id="fox" x1=".8" y1="0" x2=".3" y2="1"><stop offset="0" stopColor="#ffe24a" /><stop offset=".45" stopColor="#ff8a24" /><stop offset="1" stopColor="#f5295e" /></linearGradient>
          </defs>
          <path d="M15 0c2 2 3 3.5 3.5 5C22 7 23.5 10 23 14a11 11 0 0 1-22 0c0-4 1-7 2.5-9 .5 1 1 2 2 2.500C7 5.500 9 5 11 5.200c0-2 2-4.200 4-5.200z" fill="url(#fox)" />
          <circle cx="12" cy="13" r="5.5" fill="#7a45d8" />
          <path d="M5.5 8c3-1 5 0 6 2l-4 2 2 3c2 1.5 5 1 6-1 .5 4-4 6-7 4.500-3-1.500-4.500-6-3-10.500z" fill="#ff9a2a" />
        </Svg>
      </TaskButton>
      <TaskButton className="ml-[5px] w-[48px] bg-[#4a565a]">
        <Svg w={22} h={22}>
          <path d="M12 3h10v16H12z" fill="#fff" />
          <path d="M14 6h6M14 9h6M14 12h6M14 15h6M17 4v14" stroke="#217346" strokeWidth="1.1" />
          <path d="M0 2.5L13 0v22L0 19.5z" fill="#1e7244" />
          <text x="2.8" y="15.5" fontSize="12" fontWeight="700" fill="#fff" fontFamily="Open Sans">X</text>
        </Svg>
      </TaskButton>
      <TaskButton className="ml-[5px] w-[40px]">
        <Svg w={23} h={22}>
          <path d="M12 3h10.5v16H12z" fill="#fff" stroke="#d04423" />
          <path d="M14 13h6M14 16h6" stroke="#d04423" strokeWidth="1.2" />
          <circle cx="17" cy="8" r="3" stroke="#d04423" strokeWidth="1.3" />
          <path d="M0 2.5L13 0v22L0 19.5z" fill="#d04423" />
          <text x="3" y="15.5" fontSize="12" fontWeight="700" fill="#fff" fontFamily="Open Sans">P</text>
        </Svg>
      </TaskButton>
      <TaskButton className="ml-[9px] w-[40px]">
        <Svg w={18} h={24}>
          <defs>
            <clipPath id="drop"><path d="M8 0c1 3 10 8 10 15a9 9 0 0 1-18 0C0 10 8 6 8 0z" /></clipPath>
          </defs>
          <g clipPath="url(#drop)">
            <path d="M0 0h18v24H0z" fill="#19b5f1" />
            <path d="M0 0h18v17C12 15 8 20 0 19z" fill="#5d6fd6" />
            <path d="M0 0h18v11C12 12 8 17 0 16z" fill="#a259c9" />
            <path d="M0 0h18v8C12 9 8 13 0 13z" fill="#ef5a7a" />
            <path d="M0 0h18v5l-8 1-4 2z" fill="#ffc832" />
          </g>
        </Svg>
      </TaskButton>
      <Svg w={22} h={24} className="ml-auto">
        <path d="M1 2.5c0-3 17-3 17 0v2c4 .5 4 3 3 5-1 2-3 2-3 2v3c-1 3-16 3-17 0v-3c2-1 2-2 2-3-2-1-2-4-2-6z" fill="#f08a1c" />
        <path d="M1 3c3 2.5 14 2.5 17 0M4 8c4 2.5 14 2 17-.5M2 12c4 2 12 2 15 0" stroke="#b85f0a" />
        <path d="M6.5 22.5l4.5-4 4.5 4" stroke="#7ac520" strokeWidth="2.6" />
      </Svg>
      <Fit className="ml-[9px] w-[50px] text-[13px]">USD/ILS</Fit>
      <Fit className="ml-[10px] w-[43px] text-[13px] text-[#18b818]">+0,22%</Fit>
      <Svg w={12} h={7} className="ml-[24px]"><path d="M.7 6.3L6 1l5.3 5.3" stroke="#fff" strokeWidth="1.4" /></Svg>
      <Svg w={17} h={11} className="ml-[10px]">
        <path d="M4 11a3.500 3.500 0 0 1 0-7 5 5 0 0 1 9-.5A3.800 3.800 0 0 1 13.500 11z" fill="#f5f5f5" />
        <path d="M0 9c3-4 6-3 13 2H3.500C1.500 11 0 10 0 9z" fill="#cfcfcf" />
      </Svg>
      <Svg w={17} h={14} className="ml-[7px]">
        <path d="M5 2.5h11.3V10H4.5V7M8 13.3h6M11 10v3" stroke="#fff" strokeWidth="1.2" />
        <path d="M1 .7h4v4H1zM3 4.7v6" stroke="#fff" strokeWidth="1.2" />
      </Svg>
      <Svg w={17} h={14} className="ml-[7px]">
        <path d="M.7 4.7h2.5L7 1.2v11.600L3.200 9.300H.7z" stroke="#fff" strokeWidth="1.2" />
        <path d="M9 4.5c1 1.5 1 3.5 0 5M11.3 2.8c2 2.5 2 6 0 8.400" stroke="#fff" strokeWidth="1.1" />
        <path d="M13.8 1c2.7 3.5 2.7 8.5 0 12" stroke="#8a9497" strokeWidth="1.1" />
      </Svg>
      <Fit className="ml-[9px] w-[23px] text-[12.5px]">ENG</Fit>
      <div className="ml-[12px] flex w-[58px] flex-none flex-col items-center text-[12px] leading-[18px]">
        <Fit className="w-[43px]">7:55 AM</Fit>
        <Fit className="w-[58px]">20/03/2025</Fit>
      </div>
      <Svg w={25} h={24} className="ml-[18px] mt-[4px]">
        <path d="M0 0h16v12H8v4l-4-4H0z" fill="#fff" />
        <path d="M2.5 3h11M2.5 6h11M2.5 9h7" stroke="#1b2b30" strokeWidth="1.3" />
        <circle cx="16" cy="15.5" r="7.8" fill="#262c2f" stroke="#a0a6a8" strokeWidth="1.2" />
        <text x="16" y="19.8" textAnchor="middle" fontSize="12" fill="#fff" fontFamily="Open Sans">1</text>
      </Svg>
      <span className="ml-[12px] mr-[4px] h-full w-px bg-[#6b7578]" />
    </div>
  );
}

export default function App() {
  return (
    <div className="h-[1128px] w-[1925px] overflow-hidden border-[3px] border-[#4472a0] bg-white pl-[2px] pt-[21px] font-['Open_Sans','Noto_Sans',sans-serif]">
      <div className="flex h-[1079px] w-[1916px] flex-col overflow-hidden">
        <TitleAndTabs title="1-Select specific cells from all xlsx files in folder_WIN - Excel" titleClass="w-[314px]" />
        <Ribbon />
        <FormulaBar name="C51" />
        <Sheet />
        <TabStrip />
        <StatusBar />
        <Taskbar />
      </div>
    </div>
  );
}
